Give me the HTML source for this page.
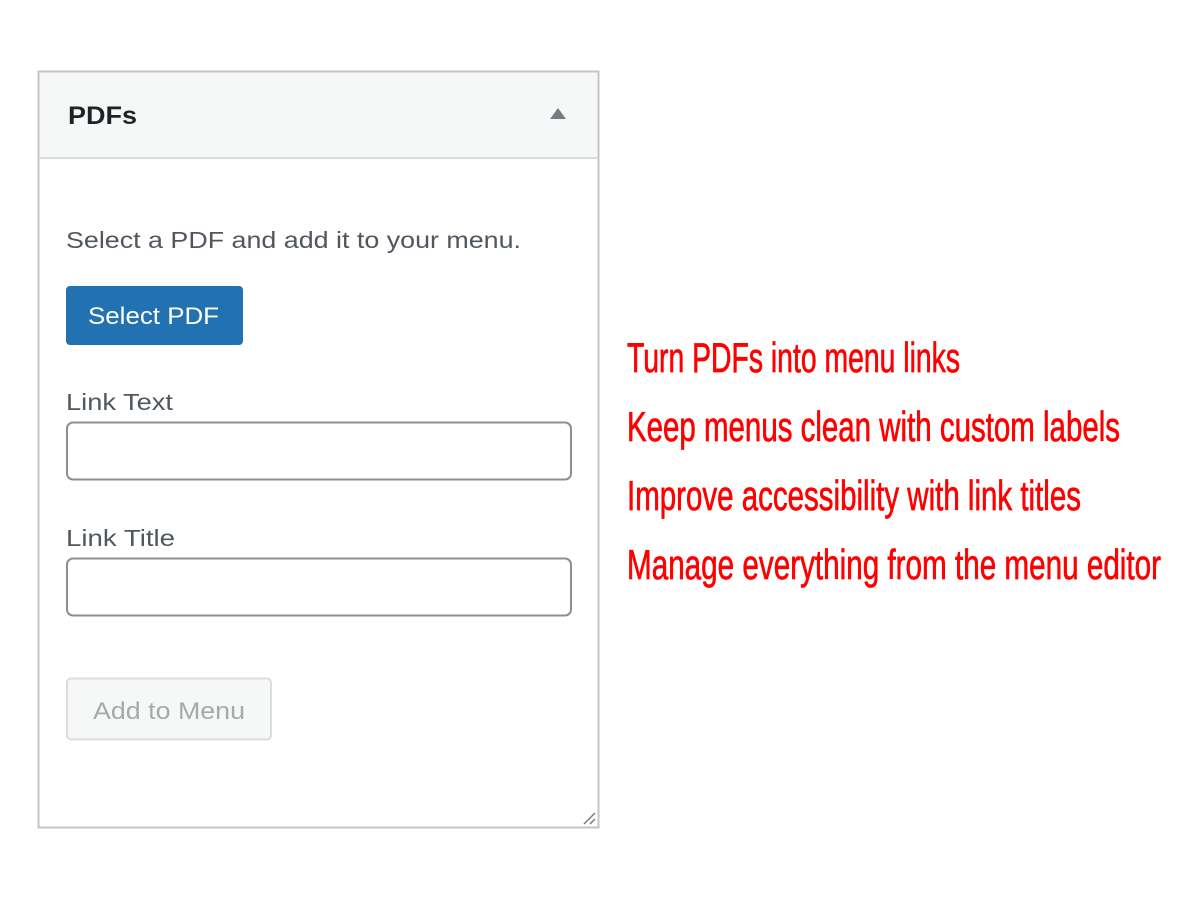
<!DOCTYPE html>
<html><head><meta charset="utf-8"><style>html,body{margin:0;padding:0;background:#fff;width:1200px;height:900px;overflow:hidden}</style></head>
<body>
<svg width="1200" height="900" viewBox="0 0 1200 900" xmlns="http://www.w3.org/2000/svg" font-family="Liberation Sans, sans-serif">
<rect x="0" y="0" width="1200" height="900" fill="#fff"/>
<rect x="38.5" y="71.5" width="560" height="756" fill="#fff" stroke="#c3c4c7" stroke-width="2"/>
<rect x="39.5" y="72.5" width="558" height="85" fill="#f6f7f7"/>
<line x1="39" y1="158" x2="598" y2="158" stroke="#dcdcde" stroke-width="2"/>
<text x="68" y="124" font-size="25" font-weight="bold" fill="#1d2327" textLength="69" lengthAdjust="spacingAndGlyphs">PDFs</text>
<polygon points="550,119 566,119 558,108" fill="#787c82"/>
<text x="66" y="248" font-size="23" fill="#50575e" textLength="455" lengthAdjust="spacingAndGlyphs">Select a PDF and add it to your menu.</text>
<rect x="66" y="286" width="177" height="59" rx="4" fill="#2271b1"/>
<text x="88" y="324" font-size="24" fill="#fff" textLength="131" lengthAdjust="spacingAndGlyphs">Select PDF</text>
<text x="66" y="410" font-size="23" fill="#50575e" textLength="107" lengthAdjust="spacingAndGlyphs">Link Text</text>
<rect x="67" y="422.5" width="504" height="57" rx="6" fill="#fff" stroke="#8c8f94" stroke-width="2"/>
<text x="66" y="546" font-size="23" fill="#50575e" textLength="109" lengthAdjust="spacingAndGlyphs">Link Title</text>
<rect x="67" y="558.5" width="504" height="57" rx="6" fill="#fff" stroke="#8c8f94" stroke-width="2"/>
<rect x="67" y="678.5" width="204" height="61" rx="4" fill="#f6f7f7" stroke="#dcdcde" stroke-width="2"/>
<text x="93" y="719" font-size="24" fill="#a7aaad" textLength="152" lengthAdjust="spacingAndGlyphs">Add to Menu</text>
<line x1="584" y1="824" x2="595" y2="813" stroke="#787c82" stroke-width="1.5"/>
<line x1="590" y1="824" x2="595" y2="819" stroke="#787c82" stroke-width="1.5"/>
<g fill="#ff0000" stroke="#ff0000" stroke-width="0.7" font-size="42">
<text x="627" y="372" textLength="333" lengthAdjust="spacingAndGlyphs">Turn PDFs into menu links</text>
<text x="627" y="441" textLength="493" lengthAdjust="spacingAndGlyphs">Keep menus clean with custom labels</text>
<text x="627" y="510" textLength="454" lengthAdjust="spacingAndGlyphs">Improve accessibility with link titles</text>
<text x="627" y="579" textLength="534" lengthAdjust="spacingAndGlyphs">Manage everything from the menu editor</text>
</g>
</svg>
</body></html>
